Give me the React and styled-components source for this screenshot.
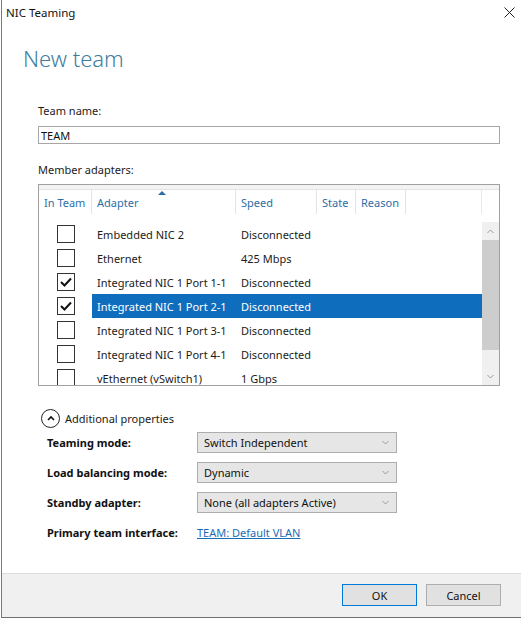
import { createGlobalStyle, styled } from 'styled-components'

const GlobalStyle = createGlobalStyle`
  html, body {
    margin: 0;
    padding: 0;
    background: #ffffff;
  }
  body {
    font-family: "Noto Sans", "Open Sans", sans-serif;
    font-size: 11px;
    color: #1b1b1b;
  }
`

const adapters = [
  { name: 'Embedded NIC 2', speed: 'Disconnected', checked: false },
  { name: 'Ethernet', speed: '425 Mbps', checked: false },
  { name: 'Integrated NIC 1 Port 1-1', speed: 'Disconnected', checked: true },
  { name: 'Integrated NIC 1 Port 2-1', speed: 'Disconnected', checked: true, selected: true },
  { name: 'Integrated NIC 1 Port 3-1', speed: 'Disconnected', checked: false },
  { name: 'Integrated NIC 1 Port 4-1', speed: 'Disconnected', checked: false },
  { name: 'vEthernet (vSwitch1)', speed: '1 Gbps', checked: false },
]

const properties = [
  { label: 'Teaming mode:', value: 'Switch Independent' },
  { label: 'Load balancing mode:', value: 'Dynamic' },
  { label: 'Standby adapter:', value: 'None (all adapters Active)' },
]

const columns = '53px 144px 81px 39px 50px 1fr'

const Chevron = ({ up }) => (
  <svg width='7' height='5' viewBox='0 0 7 5'>
    <path
      d={up ? 'M0.5 4 L3.5 1 L6.5 4' : 'M0.5 1 L3.5 4 L6.5 1'}
      fill='none'
      stroke='#9a9a9a'
      strokeWidth='1'
    />
  </svg>
)

const App = () => {
  return (
    <>
      <GlobalStyle />
      <Window>
        <TitleBar>
          <span>NIC Teaming</span>
          <CloseButton>
            <svg width='11' height='11' viewBox='0 0 11 11'>
              <path d='M0.5 0.5 L10.5 10.5 M10.5 0.5 L0.5 10.5' stroke='#222' strokeWidth='1' />
            </svg>
          </CloseButton>
        </TitleBar>

        <Body>
          <Heading>New team</Heading>

          <FieldLabel $top={30}>Team name:</FieldLabel>
          <TextInput defaultValue='TEAM' />

          <FieldLabel $top={18}>Member adapters:</FieldLabel>
          <ListBox>
            <HeaderBand />
            <HeaderRow>
              <HeaderCell>In Team</HeaderCell>
              <HeaderCell>
                Adapter
                <SortArrow />
              </HeaderCell>
              <HeaderCell>Speed</HeaderCell>
              <HeaderCell>State</HeaderCell>
              <HeaderCell>Reason</HeaderCell>
              <HeaderCell $last />
            </HeaderRow>
            <ListBody>
              <Rows>
                {adapters.map((a) => (
                  <Row key={a.name}>
                    <CheckCell>
                      <CheckBox>
                        {a.checked && (
                          <svg width='12' height='10' viewBox='0 0 12 10'>
                            <path d='M1 5 L4.5 8.5 L11 1.5' fill='none' stroke='#111' strokeWidth='2' />
                          </svg>
                        )}
                      </CheckBox>
                    </CheckCell>
                    <Highlight $selected={a.selected}>
                      <Cell>{a.name}</Cell>
                      <Cell>{a.speed}</Cell>
                    </Highlight>
                  </Row>
                ))}
              </Rows>
              <ScrollBar>
                <ScrollButton><Chevron up /></ScrollButton>
                <ScrollThumb />
                <ScrollTrack />
                <ScrollButton><Chevron /></ScrollButton>
              </ScrollBar>
            </ListBody>
          </ListBox>

          <Properties>
            <ToggleRow>
              <ToggleIcon>
                <svg width='8' height='6' viewBox='0 0 8 6'>
                  <path d='M1 5 L4 2 L7 5' fill='none' stroke='#111' strokeWidth='1.6' />
                </svg>
              </ToggleIcon>
              Additional properties
            </ToggleRow>
            {properties.map((p) => (
              <PropRow key={p.label}>
                <PropLabel>{p.label}</PropLabel>
                <Select>
                  <span>{p.value}</span>
                  <Chevron />
                </Select>
              </PropRow>
            ))}
            <PropRow>
              <PropLabel>Primary team interface:</PropLabel>
              <Link href='#'>TEAM: Default VLAN</Link>
            </PropRow>
          </Properties>
        </Body>

        <Footer>
          <Button $primary>OK</Button>
          <Button>Cancel</Button>
        </Footer>
      </Window>
    </>
  )
}

const Window = styled.div`
  box-sizing: border-box;
  width: 520px;
  height: 618px;
  margin-left: 1px;
  border-left: 1px solid #7a7a7a;
  border-bottom: 1px solid #6f6f6f;
  display: flex;
  flex-direction: column;
  background: #fff;
`

const TitleBar = styled.div`
  height: 26px;
  display: flex;
  align-items: center;
  justify-content: space-between;
  padding: 0 6px 1px 4px;
  box-sizing: border-box;
  font-size: 11.5px;
  color: #111;
`

const CloseButton = styled.div`
  display: flex;
  align-items: center;
`

const Body = styled.div`
  flex: 1;
  padding: 0 20px 0 36px;
  display: flex;
  flex-direction: column;
`

const Heading = styled.h1`
  margin: 17px 0 0 -15px;
  height: 30px;
  line-height: 30px;
  font-size: 22px;
  font-weight: 300;
  color: #3e7d9d;
`

const FieldLabel = styled.div`
  margin-top: ${(p) => p.$top}px;
  height: 16px;
  line-height: 16px;
`

const TextInput = styled.input`
  box-sizing: border-box;
  margin-top: 7px;
  width: 462px;
  height: 18px;
  border: 1px solid #a6a6a6;
  padding: 0 2px;
  font: inherit;
  color: #111;
  outline: none;
`

const ListBox = styled.div`
  box-sizing: border-box;
  margin-top: 6px;
  width: 462px;
  height: 202px;
  border: 1px solid #a0a0a0;
  display: flex;
  flex-direction: column;
  overflow: hidden;
`

const HeaderBand = styled.div`
  height: 4px;
  background: #f3f3f3;
  border-bottom: 1px solid #e3e3e3;
`

const HeaderRow = styled.div`
  display: grid;
  grid-template-columns: ${columns} 17px;
  height: 24px;
  &::after {
    content: '';
  }
`

const HeaderCell = styled.div`
  position: relative;
  display: flex;
  align-items: center;
  padding-left: 5px;
  color: #2d6ea6;
  border-right: 1px solid ${(p) => (p.$last ? '#e8e8e8' : '#e3e3e3')};
`

const SortArrow = styled.span`
  position: absolute;
  top: 1px;
  left: 66px;
  width: 0;
  height: 0;
  border-left: 4px solid transparent;
  border-right: 4px solid transparent;
  border-bottom: 4px solid #2d6ea6;
`

const ListBody = styled.div`
  flex: 1;
  display: flex;
  margin-top: 8px;
  min-height: 0;
`

const Rows = styled.div`
  flex: 1;
  display: flex;
  flex-direction: column;
`

const Row = styled.div`
  flex: none;
  display: grid;
  grid-template-columns: 53px 1fr;
  height: 24px;
`

const CheckCell = styled.div`
  display: flex;
  align-items: center;
  padding-left: 18px;
`

const CheckBox = styled.div`
  box-sizing: border-box;
  width: 18px;
  height: 18px;
  border: 1px solid #333;
  background: #fff;
  display: flex;
  align-items: center;
  justify-content: center;
`

const Highlight = styled.div`
  display: grid;
  grid-template-columns: 144px 1fr;
  align-items: center;
  background: ${(p) => (p.$selected ? '#0f6dbd' : 'transparent')};
  color: ${(p) => (p.$selected ? '#ffffff' : '#1b1b1b')};
`

const Cell = styled.div`
  padding-left: 5px;
  white-space: nowrap;
`

const ScrollBar = styled.div`
  width: 17px;
  display: flex;
  flex-direction: column;
  background: #f0f0f0;
`

const ScrollButton = styled.div`
  height: 18px;
  display: flex;
  align-items: center;
  justify-content: center;
`

const ScrollThumb = styled.div`
  height: 110px;
  background: #cdcdcd;
`

const ScrollTrack = styled.div`
  flex: 1;
`

const Properties = styled.div`
  margin-top: 22px;
  display: flex;
  flex-direction: column;
  gap: 9px;
`

const ToggleRow = styled.div`
  height: 20px;
  display: flex;
  align-items: center;
  gap: 5px;
  padding-left: 3px;
  margin-bottom: -5px;
`

const ToggleIcon = styled.div`
  box-sizing: border-box;
  width: 19px;
  height: 19px;
  border: 1px solid #222;
  border-radius: 50%;
  display: flex;
  align-items: center;
  justify-content: center;
`

const PropRow = styled.div`
  height: 21px;
  display: grid;
  grid-template-columns: 150px 200px;
  align-items: center;
  padding-left: 9px;
`

const PropLabel = styled.div`
  font-weight: 700;
  color: #111;
`

const Select = styled.div`
  box-sizing: border-box;
  height: 21px;
  border: 1px solid #adadad;
  background: #e6e6e6;
  display: flex;
  align-items: center;
  justify-content: space-between;
  padding: 0 7px 0 6px;
  color: #111;
`

const Link = styled.a`
  color: #1a6cb5;
  text-decoration: underline;
  justify-self: start;
`

const Footer = styled.div`
  height: 44px;
  border-top: 1px solid #dcdcdc;
  background: #f0f0f0;
  display: flex;
  align-items: flex-start;
  justify-content: flex-end;
  gap: 9px;
  padding: 10px 20px 0 0;
  box-sizing: border-box;
`

const Button = styled.button`
  box-sizing: border-box;
  width: 75px;
  height: 22px;
  font: inherit;
  font-size: 11px;
  color: #111;
  background: #e1e1e1;
  border: 1px solid ${(p) => (p.$primary ? '#0078d7' : '#adadad')};
  padding: 0;
`

export default App
